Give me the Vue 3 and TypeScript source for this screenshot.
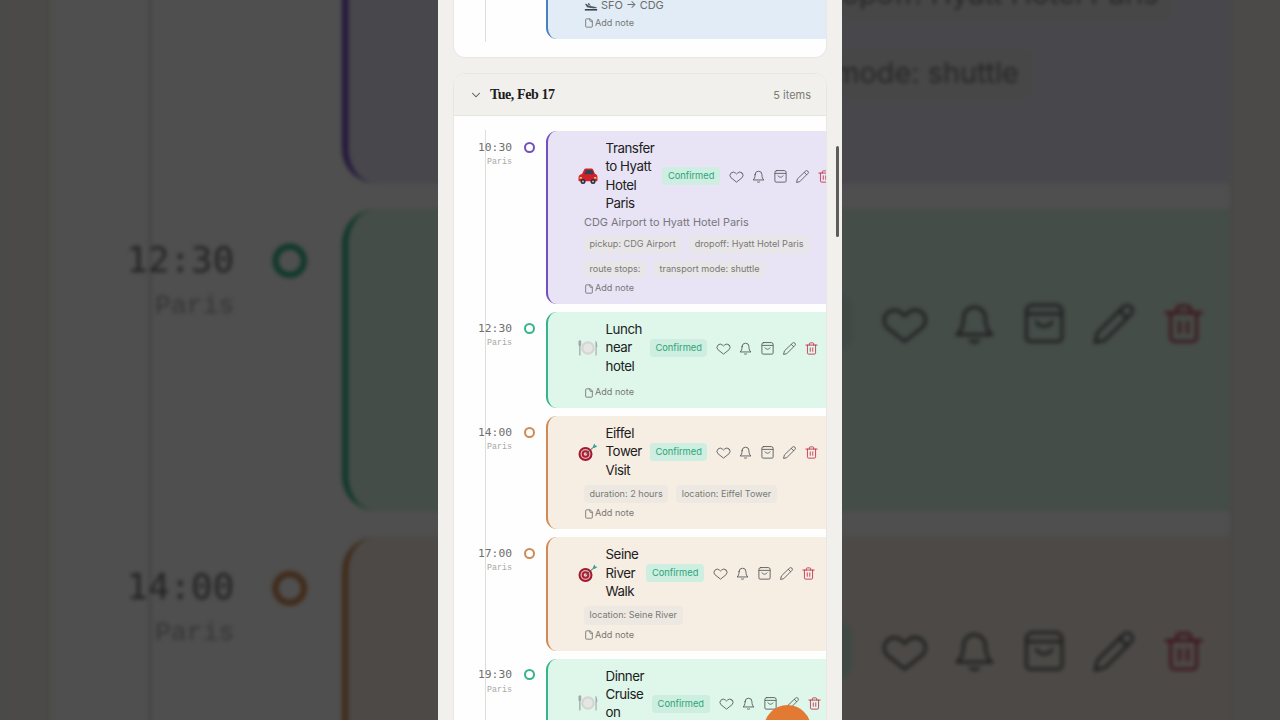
<script setup lang="ts">
type Emoji = 'car' | 'plate' | 'target'
interface Item {
  time: string
  tone: string
  emoji: Emoji
  title: string
  desc?: string
  tags: string[]
}

const layers = ['back', 'front']

const actions = [
  { name: 'heart', paths: ['M21 6.500a5.200 5.200 0 0 0-7.400 0L12 8l-1.600-1.500a5.200 5.200 0 0 0-7.400 7.300L12 21l9-7.200a5.200 5.200 0 0 0 0-7.300z'] },
  { name: 'bell', paths: ['M6.500 9a5.500 5.500 0 0 1 11 0c0 5 1.200 7 3.300 8.500H3.200C5.300 16 6.500 14 6.500 9z', 'M10 20.500c1 1 3 1 4 0'] },
  { name: 'bag', paths: ['M6 2.500h12a3 3 0 0 1 3 3V19a2 2 0 0 1-2 2H5a2 2 0 0 1-2-2V5.500a3 3 0 0 1 3-3z', 'M3.500 7h17', 'M8 11c1.500 3 6.500 3 8 0'] },
  { name: 'pencil', paths: ['M16.800 3.400a2.600 2.600 0 0 1 3.800 3.800L7.500 20.300 2.500 21.500l1.200-5z', 'M15 5.500l3.500 3.500'] },
  { name: 'trash', paths: ['M3 6.500h18', 'M8.500 6.500V4.500a1.500 1.500 0 0 1 1.500-1.500h4a1.500 1.500 0 0 1 1.500 1.500v2', 'M5.500 6.500V19a2 2 0 0 0 2 2h9a2 2 0 0 0 2-2V6.500', 'M10 11v5.500', 'M14 11v5.500'] },
]

const items: Item[] = [
  {
    time: '10:30', tone: 'purple', emoji: 'car', title: 'Transfer to Hyatt Hotel Paris',
    desc: 'CDG Airport to Hyatt Hotel Paris',
    tags: ['pickup: CDG Airport', 'dropoff: Hyatt Hotel Paris', 'route stops:', 'transport mode: shuttle'],
  },
  { time: '12:30', tone: 'green', emoji: 'plate', title: 'Lunch near hotel', tags: [] },
  { time: '14:00', tone: 'peach', emoji: 'target', title: 'Eiffel Tower Visit', tags: ['duration: 2 hours', 'location: Eiffel Tower'] },
  { time: '17:00', tone: 'peach', emoji: 'target', title: 'Seine River Walk', tags: ['location: Seine River'] },
  { time: '19:30', tone: 'green', emoji: 'plate', title: 'Dinner Cruise on Seine', tags: [] },
]
</script>

<template>
  <div class="stage">
    <div v-for="layer in layers" :key="layer" class="layer" :class="layer">
      <div class="screen">
        <section class="panel clipped">
          <div class="body">
            <div class="row">
              <div class="time-col"></div>
              <div class="dot-spacer"></div>
              <article class="card blue tall">
                <div class="route">
                  <svg class="plane" viewBox="0 -2 16 14" aria-hidden="true">
                    <path d="M1 3l2 .4 2.600 2L12 6.400c1.600.3 2.600.9 2.900 1.500-2 .4-4.500.3-7-.1L3.500 7z" fill="#4c5763" />
                    <path d="M5 4.500L4.400 2l1.300.3 2.300 3z" fill="#4c5763" />
                    <rect x="1" y="9" width="14" height="1.800" fill="#3b4148" />
                  </svg>
                  <span>SFO → CDG</span>
                </div>
                <div class="note">
                  <svg viewBox="0 0 24 24" aria-hidden="true"><path d="M15 2H6a2 2 0 0 0-2 2v16a2 2 0 0 0 2 2h12a2 2 0 0 0 2-2V7z" /><path d="M14 2v4a2 2 0 0 0 2 2h4" /></svg>
                  <span>Add note</span>
                </div>
              </article>
            </div>
          </div>
        </section>

        <section class="panel">
          <header class="day-head">
            <svg class="chev" viewBox="0 0 24 24" aria-hidden="true"><path d="M6 9l6 6 6-6" /></svg>
            <h2>Tue, Feb 17</h2>
            <span class="count">5 items</span>
          </header>
          <div class="body list">
            <div v-for="item in items" :key="item.time" class="row">
              <div class="time-col">
                <div class="time">{{ item.time }}</div>
                <div class="place">Paris</div>
              </div>
              <span class="dot" :class="item.tone"></span>
              <article class="card" :class="item.tone">
                <div class="head">
                  <svg v-if="item.emoji === 'car'" class="emoji" viewBox="0 0 20 20" aria-hidden="true">
                    <path d="M.5 11.500c0-2 1.300-3 3.500-3.600l2.200-4.300c.4-.8 1-1.100 1.900-1.100h5c1 0 1.700.4 2.100 1.300l1.700 4c1.700.5 2.600 1.600 2.600 3.500v3c0 .6-.4 1-1 1H1.500c-.6 0-1-.4-1-1z" fill="#d3202c" />
                    <path d="M6.200 8.300l1.700-3.800c.2-.4.500-.6.900-.6h4.600c.5 0 .8.2 1 .6l1.500 3.800z" fill="#33434b" />
                    <rect x="1.500" y="11" width="2.500" height="1.500" rx=".6" fill="#f5d76e" />
                    <rect x="16" y="11" width="2.500" height="1.500" rx=".6" fill="#f5d76e" />
                    <circle cx="5" cy="15.500" r="2.500" fill="#263238" />
                    <circle cx="15" cy="15.500" r="2.500" fill="#263238" />
                    <circle cx="5" cy="15.500" r="1" fill="#b0bec5" />
                    <circle cx="15" cy="15.500" r="1" fill="#b0bec5" />
                  </svg>
                  <svg v-else-if="item.emoji === 'plate'" class="emoji" viewBox="0 0 20 20" aria-hidden="true">
                    <circle cx="10" cy="10" r="6.800" fill="#d4d6d4" />
                    <circle cx="10" cy="10" r="4.600" fill="#e4e6e4" />
                    <rect x="1.200" y="2.500" width="1.300" height="15" rx=".6" fill="#a2a8a6" />
                    <rect x=".5" y="2.500" width="2.700" height="5.500" rx="1" fill="#a2a8a6" />
                    <path d="M17.500 2.500c1.300 1 1.800 3 1.800 6.500h-.7v8.500h-1.100z" fill="#a2a8a6" />
                  </svg>
                  <svg v-else class="emoji" viewBox="0 0 20 20" aria-hidden="true">
                    <circle cx="7.500" cy="12" r="7" fill="#a3182c" />
                    <circle cx="7.500" cy="12" r="5" fill="#dfb8bc" />
                    <circle cx="7.500" cy="12" r="3.800" fill="#b01c30" />
                    <circle cx="7.500" cy="12" r="1.800" fill="#ecd0d0" />
                    <path d="M7.500 12L16 4.800" stroke="#4a5a60" stroke-width="1" />
                    <path d="M14.800 4.500L16.500 1.500l.9 2 2.100.6-3 2z" fill="#2fa69a" />
                  </svg>
                  <div class="title">{{ item.title }}</div>
                  <span class="badge">Confirmed</span>
                  <div class="actions">
                    <svg v-for="a in actions" :key="a.name" class="act" :class="a.name" viewBox="0 0 24 24" aria-hidden="true">
                      <path v-for="d in a.paths" :key="d" :d="d" />
                    </svg>
                  </div>
                </div>
                <p v-if="item.desc" class="desc">{{ item.desc }}</p>
                <div v-if="item.tags.length" class="tags">
                  <span v-for="t in item.tags" :key="t" class="tag">{{ t }}</span>
                </div>
                <div class="note" :class="{ alone: !item.tags.length }">
                  <svg viewBox="0 0 24 24" aria-hidden="true"><path d="M15 2H6a2 2 0 0 0-2 2v16a2 2 0 0 0 2 2h12a2 2 0 0 0 2-2V7z" /><path d="M14 2v4a2 2 0 0 0 2 2h4" /></svg>
                  <span>Add note</span>
                </div>
              </article>
            </div>
          </div>
        </section>

        <span class="thumb"></span>
        <span class="fab"></span>
      </div>
    </div>
  </div>
</template>

<style scoped>
.stage {
  position: relative;
  width: 1280px;
  height: 720px;
  overflow: hidden;
  background: #4b4b4b;
  font-family: Inter, "Noto Sans", sans-serif;
}
.layer {
  display: flex;
  justify-content: center;
  height: 720px;
}
.layer.back {
  position: absolute;
  inset: 0;
  transform: scale(3.17, 3.15);
  transform-origin: 640px 360px;
  filter: blur(.6px) brightness(.31);
}
.layer.front {
  position: relative;
}
.screen {
  position: relative;
  width: 404px;
  height: 720px;
  box-sizing: border-box;
  padding: 0 15px;
  overflow: hidden;
  background: #f1f0ec;
}
.panel {
  position: relative;
  margin-bottom: 15px;
  background: #fefefe;
  border: 1px solid #e8e7e2;
  border-radius: 12px;
  overflow: hidden;
}
.panel.clipped {
  display: flex;
  flex-direction: column;
  justify-content: flex-end;
  height: 58px;
  box-sizing: border-box;
  border-top: 0;
  border-radius: 0 0 12px 12px;
}
.day-head {
  display: flex;
  align-items: center;
  height: 41px;
  padding: 0 15px;
  background: #f1f0ec;
  border-bottom: 1px solid #e6e5e0;
}
.chev {
  width: 14px;
  height: 14px;
  margin-right: 7px;
  fill: none;
  stroke: #555;
  stroke-width: 1.800;
  stroke-linecap: round;
  stroke-linejoin: round;
}
.day-head h2 {
  margin: 0;
  flex: 1;
  font: 700 14px/1 "Liberation Serif", serif;
  letter-spacing: -.4px;
  color: #1c1c1c;
}
.count {
  font-size: 11px;
  color: #7b7a74;
}
.body {
  position: relative;
  padding: 15px 0 18px;
}
.body::before {
  content: "";
  position: absolute;
  left: 31px;
  top: 14px;
  bottom: 15px;
  width: 1px;
  background: #dedddb;
}
.panel.clipped .body {
  padding-top: 0;
}
.list {
  display: flex;
  flex-direction: column;
  gap: 8px;
}
.row {
  position: relative;
  display: flex;
  align-items: flex-start;
}
.time-col {
  width: 58px;
  flex: none;
  padding-top: 9.500px;
  text-align: right;
}
.time {
  font: 11.300px/14px "DejaVu Sans Mono", monospace;
  color: #6f6f6d;
}
.place {
  margin-top: 1.500px;
  font: 8.300px/11px "Liberation Mono", monospace;
  color: #a8a8a5;
}
.dot-spacer {
  width: 34px;
  flex: none;
}
.dot {
  flex: none;
  box-sizing: border-box;
  width: 11px;
  height: 11px;
  margin: 10.500px 11.500px 0;
  border: 2.300px solid #888;
  border-radius: 50%;
  background: #fff;
}
.dot.purple { border-color: #7350bd; }
.dot.green { border-color: #35b58a; }
.dot.peach { border-color: #cf8a55; }
.card {
  flex: 1;
  min-width: 0;
  margin-right: -12px;
  box-sizing: border-box;
  padding: 8px 0 9.500px 36px;
  border-left: 2px solid #888;
  border-radius: 11px;
}
.card.purple { background: #e8e4f5; border-color: #7350bd; }
.card.green { background: #def7ea; border-color: #35b58a; }
.card.peach { background: #f6ede3; border-color: #cf8a55; }
.card.blue { background: #e1ecf6; border-color: #4a7fc0; }
.card.tall {
  display: flex;
  flex-direction: column;
  justify-content: flex-end;
  min-height: 90px;
  padding-bottom: 10px;
}
.route {
  display: flex;
  align-items: center;
  gap: 3px;
  height: 15px;
  font-size: 11px;
  color: #6c6c6a;
}
.plane {
  width: 14px;
  height: 13px;
}
.head {
  display: flex;
  align-items: center;
  gap: 7.500px;
  margin-left: -6px;
}
.emoji {
  flex: none;
  width: 20px;
  height: 20px;
}
.title {
  flex: none;
  width: min-content;
  font-size: 13.300px;
  letter-spacing: -.45px;
  line-height: 18.300px;
  color: #202020;
}
.badge {
  flex: none;
  padding: 0 5.500px;
  margin: 1px 0 0 .5px;
  font-size: 9.300px;
  line-height: 18px;
  color: #2ea578;
  background: #cdeee0;
  border-radius: 4px;
}
.actions {
  display: flex;
  flex: none;
  gap: 7px;
  margin: 1px 0 0 1.500px;
}
.act {
  width: 15px;
  height: 15px;
  fill: none;
  stroke: #54585a;
  stroke-width: 1.400;
  stroke-linecap: round;
  stroke-linejoin: round;
}
.act.trash {
  stroke: #c0344c;
}
.desc {
  margin: 4px 0 0;
  font-size: 10.900px;
  line-height: 13px;
  color: #77777c;
}
.tags {
  display: flex;
  flex-wrap: wrap;
  gap: 6px 8px;
  margin-top: 6px;
}
.tag {
  padding: 0 5.500px;
  font-size: 9.100px;
  line-height: 18.500px;
  color: #797973;
  background: rgba(232, 230, 226, .65);
  border-radius: 4px;
}
.note {
  display: flex;
  align-items: center;
  gap: 1px;
  height: 14px;
  margin-top: 2.500px;
  font-size: 9.100px;
  color: #777775;
}
.note.alone {
  margin-top: 9.500px;
}
.note svg {
  width: 10px;
  height: 10px;
  margin-top: 2px;
  fill: none;
  stroke: #6e6e6c;
  stroke-width: 2;
  stroke-linejoin: round;
}
.thumb {
  position: absolute;
  left: 398px;
  top: 146px;
  width: 3px;
  height: 91px;
  border-radius: 2px;
  background: #5d5d59;
}
.fab {
  position: absolute;
  left: 326px;
  top: 705px;
  width: 47px;
  height: 47px;
  border-radius: 50%;
  background: #e27a33;
}
</style>
